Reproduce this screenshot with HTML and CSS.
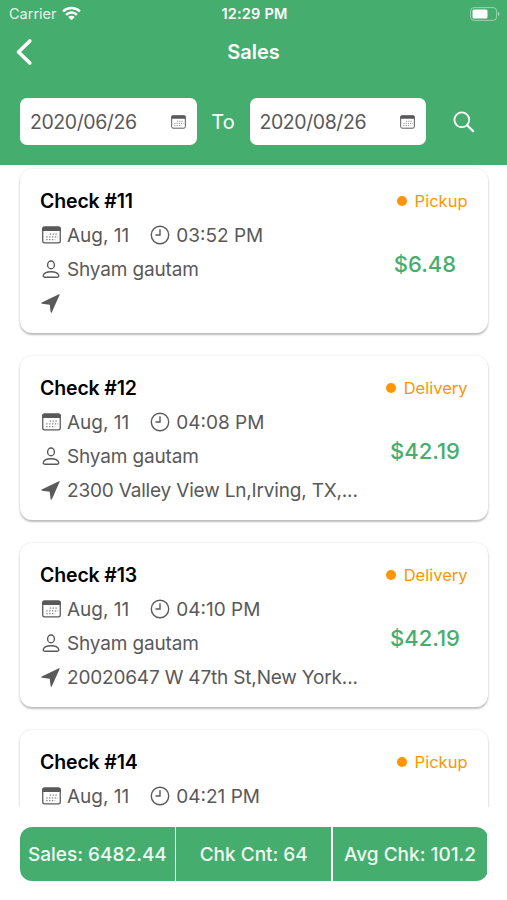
FILE: index.html
```html
<!DOCTYPE html>
<html lang="en">
<head>
<meta charset="utf-8">
<title>Sales</title>
<link rel="stylesheet" href="styles.css">
</head>
<body>
<svg class="sprite" aria-hidden="true">
  <symbol id="calendar" viewBox="0 0 18 17">
    <rect x=".7" y="1" width="16.6" height="15" rx="1.8" fill="none" stroke="currentColor" stroke-width="1.2"/>
    <path d="M.2 4.6V2.3Q.2.5 2 .5h14q1.800 0 1.800 1.800v2.300z" fill="currentColor"/>
    <path d="M7.300 7.600h8M4 10.200h11.300M4 12.800h8.500" fill="none" stroke="currentColor" stroke-opacity=".75" stroke-width="1.200" stroke-dasharray="1.300 1.400"/>
  </symbol>
  <symbol id="clock" viewBox="0 0 20 20">
    <circle cx="10" cy="10" r="8.700" fill="none" stroke="currentColor" stroke-width="1.400"/>
    <path d="M10 4.300V10H5.500" fill="none" stroke="currentColor" stroke-width="1.400"/>
  </symbol>
  <symbol id="person" viewBox="0 0 18 18">
    <ellipse cx="9" cy="4.900" rx="3.400" ry="3.900" fill="none" stroke="currentColor" stroke-width="1.400"/>
    <path d="M2.700 17.200h12.600c1.200 0 1.700-.8 1.400-1.800C15.900 12.900 12.700 11.700 9 11.700S2.100 12.900 1.300 15.400c-.3 1 .2 1.800 1.400 1.800z" fill="none" stroke="currentColor" stroke-width="1.400"/>
  </symbol>
  <symbol id="arrow" viewBox="0 0 18 18">
    <path d="M17.800.5 10.300 17.200Q9.600 18.300 9.100 17L8.300 10.100 1 9.200Q-.5 8.700.7 8L17 .2Q17.900 0 17.800.5z" fill="currentColor"/>
  </symbol>
</svg>
<div class="screen">
  <header class="header">
    <div class="status">
      <div class="carrier">Carrier
        <svg class="wifi" viewBox="0 0 18 14"><path d="M1 5.100a11.500 11.500 0 0 1 16 0M3.900 8.200a7.300 7.300 0 0 1 10.200 0" fill="none" stroke="#fff" stroke-width="2.300"/><path d="M5.900 10.300a4.400 4.400 0 0 1 6.200 0L9 13.500z" fill="#fff"/></svg>
      </div>
      <div class="time">12:29 PM</div>
      <svg class="battery" viewBox="0 0 30 14"><rect x=".6" y=".6" width="26" height="12.800" rx="3.500" fill="none" stroke="#fff" stroke-opacity=".45"/><rect x="2.500" y="2.500" width="15" height="9" rx="1.500" fill="#fff"/><path d="M28 4.800q3 2.200 0 4.400z" fill="#fff" fill-opacity=".5"/></svg>
    </div>
    <div class="nav">
      <svg class="back" viewBox="0 0 18 28"><path d="M14.800 3 3.500 14l11.300 11" fill="none" stroke="#fff" stroke-width="3.600" stroke-linecap="round" stroke-linejoin="round"/></svg>
      <h1 class="title">Sales</h1>
    </div>
    <div class="filters">
      <div class="date"><span>2020/06/26</span><svg><use href="#calendar"/></svg></div>
      <span class="to">To</span>
      <div class="date"><span>2020/08/26</span><svg><use href="#calendar"/></svg></div>
      <svg class="search" viewBox="0 0 22 22"><circle cx="8.800" cy="8.800" r="7.400" fill="none" stroke="#fff" stroke-width="1.800"/><path d="m14.200 14.200 6 6" stroke="#fff" stroke-width="2.200" stroke-linecap="round"/></svg>
    </div>
  </header>
  <main class="list">
    <article class="card">
      <div class="info">
        <h2 class="check">Check #11</h2>
        <div class="row"><svg class="cal"><use href="#calendar"/></svg><span class="day">Aug, 11</span><svg class="clock"><use href="#clock"/></svg><span class="hour">03:52 PM</span></div>
        <div class="row"><svg class="person"><use href="#person"/></svg><span class="name">Shyam gautam</span></div>
        <div class="row"><svg class="arrow"><use href="#arrow"/></svg></div>
      </div>
      <div class="side"><div class="kind">Pickup</div><div class="price">$6.48</div></div>
    </article>
    <article class="card">
      <div class="info">
        <h2 class="check">Check #12</h2>
        <div class="row"><svg class="cal"><use href="#calendar"/></svg><span class="day">Aug, 11</span><svg class="clock"><use href="#clock"/></svg><span class="hour">04:08 PM</span></div>
        <div class="row"><svg class="person"><use href="#person"/></svg><span class="name">Shyam gautam</span></div>
        <div class="row"><svg class="arrow"><use href="#arrow"/></svg><span class="address">2300 Valley View Ln,Irving, TX,...</span></div>
      </div>
      <div class="side"><div class="kind">Delivery</div><div class="price">$42.19</div></div>
    </article>
    <article class="card">
      <div class="info">
        <h2 class="check">Check #13</h2>
        <div class="row"><svg class="cal"><use href="#calendar"/></svg><span class="day">Aug, 11</span><svg class="clock"><use href="#clock"/></svg><span class="hour">04:10 PM</span></div>
        <div class="row"><svg class="person"><use href="#person"/></svg><span class="name">Shyam gautam</span></div>
        <div class="row"><svg class="arrow"><use href="#arrow"/></svg><span class="address">20020647 W 47th St,New York...</span></div>
      </div>
      <div class="side"><div class="kind">Delivery</div><div class="price">$42.19</div></div>
    </article>
    <article class="card">
      <div class="info">
        <h2 class="check">Check #14</h2>
        <div class="row"><svg class="cal"><use href="#calendar"/></svg><span class="day">Aug, 11</span><svg class="clock"><use href="#clock"/></svg><span class="hour">04:21 PM</span></div>
      </div>
      <div class="side"><div class="kind">Pickup</div></div>
    </article>
  </main>
  <footer class="totals">
    <div>Sales: 6482.44</div>
    <div>Chk Cnt: 64</div>
    <div>Avg Chk: 101.2</div>
  </footer>
</div>
</body>
</html>
```
FILE: styles.css
```css
* { box-sizing: border-box; }
body { margin: 0; background: #fff; font-family: Inter, "Liberation Sans", sans-serif; color: #595959; }
svg { display: block; flex: none; }
.sprite { display: none; }
.screen { display: flex; flex-direction: column; width: 507px; height: 900px; overflow: hidden; }

.header { flex: none; height: 164.500px; background: #45ae6e; color: #fff; }
.status { display: grid; grid-template-columns: 1fr auto 1fr; align-items: center; height: 27px; padding: 0 7px 0 9px; font-size: 14.500px; }
.carrier { display: flex; align-items: center; gap: 5px; color: #e3f4e9; }
.wifi { width: 19px; height: 15px; }
.time { font-weight: 600; letter-spacing: .2px; }
.battery { width: 30px; height: 14px; justify-self: end; }
.nav { display: grid; grid-template-columns: 40px 1fr 40px; align-items: center; height: 50px; padding: 0 15px; }
.back { width: 18px; height: 28px; }
.title { margin: 0; font-size: 20px; font-weight: 600; text-align: center; }
.filters { display: flex; align-items: center; margin-top: 21px; padding-left: 20px; }
.date { display: flex; align-items: center; justify-content: space-between; width: 176.500px; height: 47px; padding: 0 11px 0 10px; border-radius: 7px; background: #fff; color: #595959; font-size: 19.500px; letter-spacing: -.42px; }
.date svg { width: 15px; height: 14px; }
.to { width: 53px; text-align: center; font-size: 20px; }
.search { width: 22px; height: 22px; margin-left: 27px; }

.list { display: flex; flex-direction: column; gap: 22px; height: 642.500px; padding: 4.500px 19px 0 20px; overflow: hidden; }
.card { display: flex; flex: none; justify-content: space-between; height: 164px; margin-bottom: 1px; padding: 16px 20px 0; border-radius: 12px; background: #fff; box-shadow: 0 2px 2px rgba(0, 0, 0, .24), 0 0 3px rgba(0, 0, 0, .1); }
.check { margin: 0 0 1px; color: #000; font-size: 19.500px; line-height: 32px; font-weight: 600; letter-spacing: -.15px; }
.row { display: flex; align-items: center; height: 34px; font-size: 19px; white-space: nowrap; }
.cal { width: 19px; height: 18px; margin: 0 6.500px 0 1.500px; }
.clock { width: 20px; height: 20px; margin: 0 6px 0 21px; }
.person { width: 18px; height: 18px; margin: 0 7px 0 2px; }
.arrow { width: 19px; height: 19px; margin: 0 7px 0 1px; }
.name { letter-spacing: -.15px; }
.address { letter-spacing: -.18px; }
.side { display: flex; flex-direction: column; align-items: flex-end; width: 86px; }
.kind { display: flex; align-items: center; gap: 8px; height: 31px; margin: 0 .5px 1px 0; color: #ff9500; font-size: 16.500px; }
.kind::before { content: ""; width: 10px; height: 10px; border-radius: 50%; background: #ff9500; }
.price { align-self: center; margin-top: 31px; color: #45ae6e; font-size: 22px; line-height: 32px; font-weight: 500; }

.totals { display: grid; grid-template-columns: repeat(3, 1fr); gap: 1.500px; flex: none; height: 54px; margin: 20px 19.500px 0 20px; border-radius: 12px; overflow: hidden; }
.totals div { display: flex; align-items: center; justify-content: center; background: #45ae6e; color: #effaf2; font-size: 19px; font-weight: 500; white-space: nowrap; }
```
